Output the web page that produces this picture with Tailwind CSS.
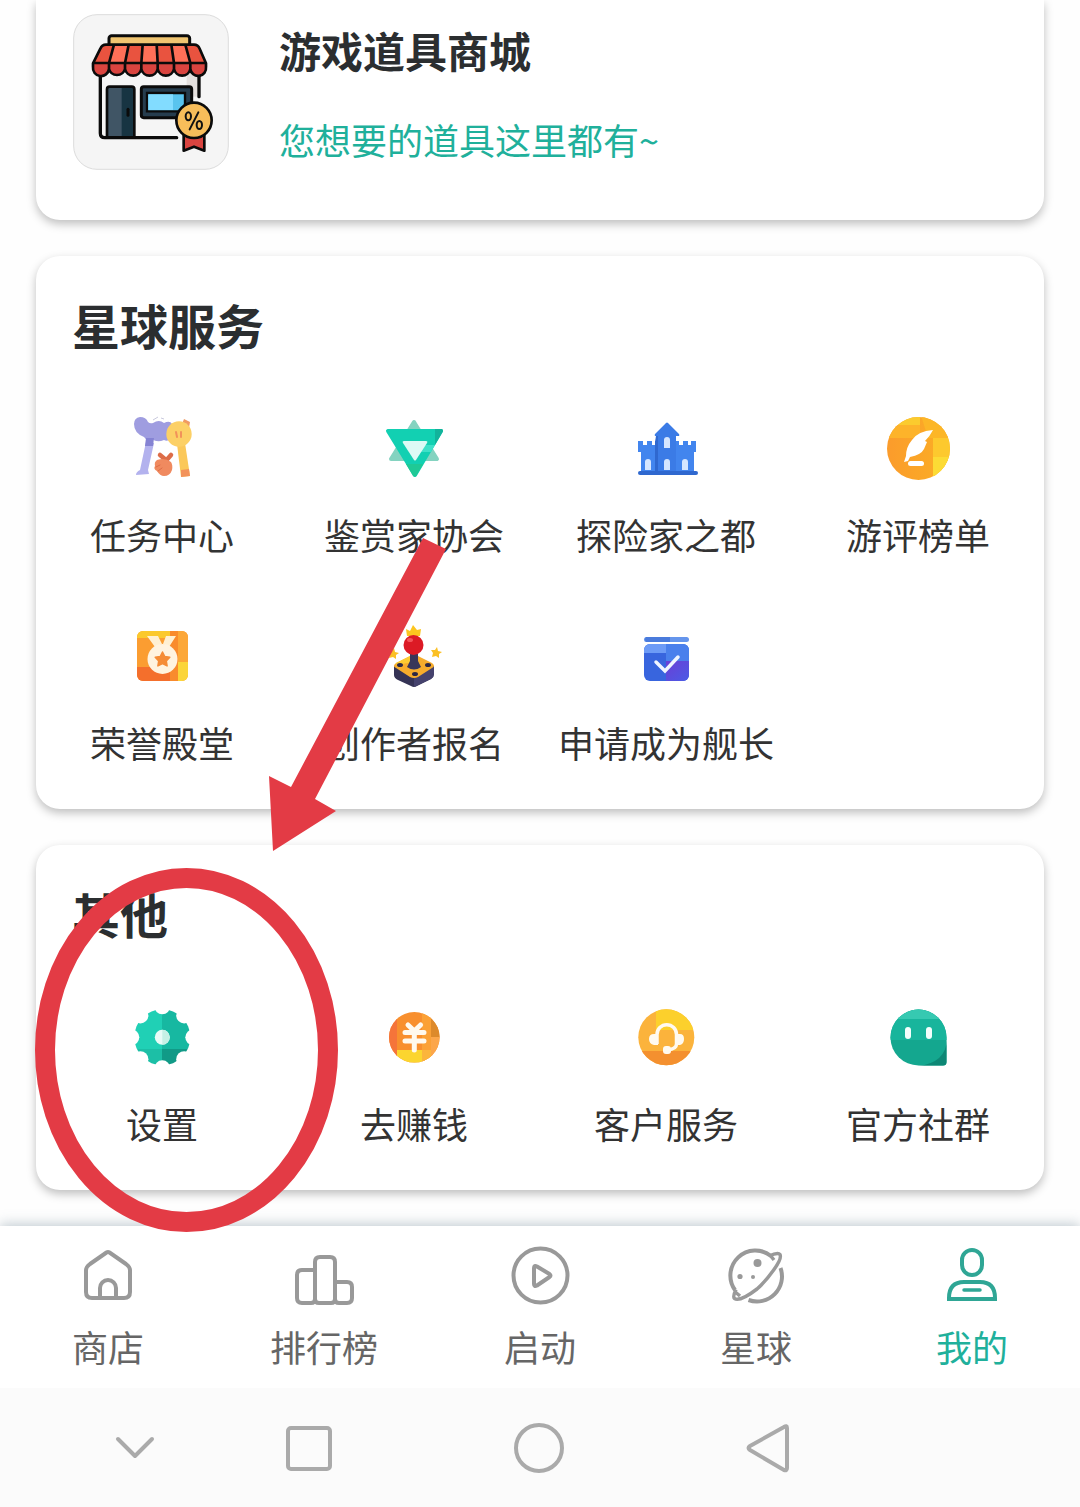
<!DOCTYPE html>
<html lang="zh-CN">
<head>
    <meta charset="UTF-8">
    <meta name="viewport" content="width=device-width, initial-scale=1.0">
    <title>我的</title>
    <script src="https://cdn.jsdelivr.net/npm/@tailwindcss/browser@4"></script>
</head>
<body class="relative min-h-screen overflow-x-hidden bg-[#fefefe] font-['Noto_Sans_CJK_SC',sans-serif] text-[#333]">
    <main class="flex flex-col gap-9 px-9 pb-9">
        <!-- Mall -->
        <a href="#mall" class="flex gap-[50px] rounded-b-3xl bg-white px-[37px] pt-[14px] pb-[50px] shadow-[0_4px_10px_rgba(0,0,0,0.25)]">
            <svg class="size-[156px] shrink-0" viewBox="39 42 468 468" aria-hidden="true">
                <rect x="41" y="44" width="464" height="464" rx="70" fill="#f5f5f5" stroke="#dcdcdc" stroke-width="3"/>
                <path d="M121 215V400q0 13 13 13H350" fill="none" stroke="#0b0b0b" stroke-width="10" stroke-linecap="round"/>
                <path d="M380 215h37v75h-37z" fill="#e4e0de"/>
                <path d="M417 215v75" stroke="#0b0b0b" stroke-width="10" stroke-linecap="round"/>
                <rect x="147" y="107" width="242" height="40" rx="8" fill="#f0c571" stroke="#0b0b0b" stroke-width="9"/>
                <path d="M138 134H402q12 0 17 12l18 44H99l22-44q5-12 17-12z" fill="#e9533f"/>
                <path d="M162 134h44l-8 54h-50zM247 134h43l3 54h-48zM335 134h44l12 54h-48z" fill="#ff7058"/>
                <path d="M99 190H438v11a23 23 0 0 1-47 6a25 25 0 0 1-49 0a25 25 0 0 1-49 0a25 25 0 0 1-49 0a25 25 0 0 1-49 0a25 25 0 0 1-48 0a23 23 0 0 1-48-6z" fill="#d9443f"/>
                <path d="M99 190l22-44q5-12 17-12H402q12 0 17 12l19 44v11a23 23 0 0 1-47 6a25 25 0 0 1-49 0a25 25 0 0 1-49 0a25 25 0 0 1-49 0a25 25 0 0 1-49 0a25 25 0 0 1-48 0a23 23 0 0 1-48-6zM99 189H438M162 134l-15 55v18M206 134l-11 55v18M248 134l-4 55v18M290 134l3 55v18M334 134l8 55v18M376 134l15 55v18" fill="none" stroke="#0b0b0b" stroke-width="8" stroke-linejoin="round"/>
                <path d="M141 412V268q0-8 8-8h66q8 0 8 8v144z" fill="#173442"/>
                <path d="M143 262h42v148h-42z" fill="#405565"/>
                <path d="M141 412V268q0-8 8-8h66q8 0 8 8v144z" fill="none" stroke="#0b0b0b" stroke-width="8"/>
                <path d="M204 328v18" stroke="#0b0b0b" stroke-width="9" stroke-linecap="round"/>
                <rect x="244" y="260" width="151" height="93" rx="7" fill="#263d4e" stroke="#0b0b0b" stroke-width="9"/>
                <path d="M261 279h114v55H261z" fill="#59c4ee" stroke="#0b0b0b" stroke-width="7"/>
                <path d="M265 283h74v47h-74z" fill="#82dcff"/>
                <path d="M371 395v57l31-12 31 12v-57z" fill="#d94440" stroke="#0b0b0b" stroke-width="8" stroke-linejoin="round"/>
                <circle cx="402" cy="361" r="53" fill="#f7bd5a" stroke="#0b0b0b" stroke-width="8"/>
                <path d="M415 337l-26 51" stroke="#111" stroke-width="6" stroke-linecap="round"/>
                <ellipse cx="385" cy="349" rx="8" ry="12" fill="none" stroke="#111" stroke-width="6"/>
                <ellipse cx="418" cy="375" rx="8" ry="12" fill="none" stroke="#111" stroke-width="6"/>
            </svg>
            <div class="pt-1.5">
                <h2 class="text-[42px] leading-[60px] font-bold text-[#2b2e30]">游戏道具商城</h2>
                <p class="mt-[35px] text-4xl leading-[48px] text-[#20b09b]">您想要的道具这里都有~</p>
            </div>
        </a>

        <!-- Planet services -->
        <section class="rounded-3xl bg-white pt-10 pb-[43px] shadow-[0_4px_10px_rgba(0,0,0,0.25)]">
            <h2 class="px-9 text-[48px] leading-[56px] font-bold text-[#2b2e30]">星球服务</h2>
            <div class="mt-15 grid grid-cols-4 gap-y-[62px] text-4xl leading-[48px] whitespace-nowrap">
                <a href="#tasks" class="flex flex-col items-center gap-[26px]">
                    <svg class="size-[72px]" viewBox="0 0 72 72" aria-hidden="true">
                        <path d="M20 30l8 1-6 27 1 4-13 1q0-3 4-5z" fill="#b3b2ee"/>
                        <path d="M8 12q0-6 6-7 6 0 8 5 2 2 5 1 6-4 11 0 6-3 8 1v14q-4 4-8 2-7 3-12-1-5 3-8-2Q8 21 8 12z" fill="#9f9de0"/>
                        <path d="M20 26h8l-1 8h-8z" fill="#8583d3"/>
                        <path d="M27 8l5-3m3 1l3 1" stroke="#c9c9dd" fill="none"/>
                        <path d="M58 7l6 3-1 6-7-4z" fill="#f09a62"/>
                        <path d="M51 32l8-1 5 33-9 1z" fill="#fbc85a"/>
                        <path d="M55 58l8-1 1 7-9 1z" fill="#f2925a"/>
                        <circle cx="53" cy="22" r="12.7" fill="#fcd066"/>
                        <path d="M50 20l1 5m4-5v5" stroke="#f2925a" stroke-width="2" stroke-linecap="round"/>
                        <path d="M34 43l6 5m5-5l-7 8" stroke="#dd6d48" stroke-width="4.500" stroke-linecap="round"/>
                        <path d="M31 48q8-3 14 2 2 3 1 8-2 6-8 6-4 0-7-5-4-2-2-5-1-4 2-6z" fill="#f08a5f"/>
                        <path d="M30 55l4-2m-2 6l4-3" stroke="#dd6d48" stroke-linecap="round"/>
                    </svg>
                    <span>任务中心</span>
                </a>
                <a href="#critics" class="flex flex-col items-center gap-[26px]">
                    <svg class="size-[72px]" viewBox="0 0 72 72" aria-hidden="true">
                        <path d="M36 10L59 47H13z" fill="#84d3c0" stroke="#84d3c0" stroke-width="4" stroke-linejoin="round"/>
                        <path d="M10 19h53L37 63z" fill="#12d0b2" stroke="#12d0b2" stroke-width="4" stroke-linejoin="round"/>
                        <path d="M57 17h7q2 1 0 4l-7 12z" fill="#12b39b"/>
                        <path d="M45 33h12l-4 7H43z" fill="#3fe0c8"/>
                        <path d="M28 52h17l-7 12q-1 1-3 0z" fill="#1fc996"/>
                        <path d="M26 29h22q2 0 1 2L38 48q-1 1-2 0L25 31q-1-2 1-2z" fill="#dcfaf5"/>
                    </svg>
                    <span>鉴赏家协会</span>
                </a>
                <a href="#explorers" class="flex flex-col items-center gap-[26px]">
                    <svg class="size-[72px]" viewBox="0 0 72 72" aria-hidden="true">
                        <path d="M8 29h5v4h4v-4h5v4h3v-4h4v30H11V40H8zM46 29h3v4h4v-4h5v4h3v-4h5v11h-2v19H46z" fill="#4285ee"/>
                        <path d="M25 22L36 11q1-1 2 0l11 11q1 2-1 2h-2v35H28V24h-2q-2 0-1-2z" fill="#3b7be6"/>
                        <path d="M26 24h2v35h-3V30z" fill="#2f68cf"/>
                        <path d="M34 36v-8a3 3 0 0 1 6 0v8zM15 58v-8a3 3 0 0 1 6 0v8zM34 58v-8a3 3 0 0 1 6 0v8zM52 58v-8a3 3 0 0 1 6 0v8z" fill="#d5e6ff"/>
                        <rect x="8" y="59" width="60" height="4" rx="2" fill="#2f68cf"/>
                    </svg>
                    <span>探险家之都</span>
                </a>
                <a href="#reviews" class="flex flex-col items-center gap-[26px]">
                    <svg class="size-[72px]" viewBox="0 0 72 72" aria-hidden="true">
                        <defs>
                            <clipPath id="coin"><circle cx="36.5" cy="36.500" r="31.500"/></clipPath>
                            <linearGradient id="amber" x1="0" x2="1"><stop stop-color="#fb9a2c"/><stop offset="1" stop-color="#fbb024"/></linearGradient>
                        </defs>
                        <g clip-path="url(#coin)">
                            <path d="M0 0h72v72H0z" fill="url(#amber)"/>
                            <path d="M0 13h38v13H0z" fill="#fdb32a"/>
                            <path d="M0 0h38v13H0z" fill="#fbcb2e"/>
                            <path d="M38 0h34v26H46z" fill="#fcb627"/>
                            <path d="M51 26h21v46H51z" fill="#fdc92e"/>
                            <path d="M51 45h21v27H51z" fill="#fcdb35"/>
                        </g>
                        <path d="M51 18Q36 19 30 28q-6 7-6 16l-2 6 4-1 2-4q11-2 14-8l3-7-2-1q5-5 8-11z" fill="#fff"/>
                        <rect x="26" y="49" width="16" height="5" rx="2.500" fill="#fff"/>
                    </svg>
                    <span>游评榜单</span>
                </a>
                <a href="#honor" class="flex flex-col items-center gap-[26px]">
                    <svg class="size-[72px]" viewBox="0 0 72 72" aria-hidden="true">
                        <clipPath id="badge"><rect x="11" y="11" width="51" height="50" rx="6"/></clipPath>
                        <g clip-path="url(#badge)">
                            <path d="M0 0h72v72H0z" fill="#fb9d31"/>
                            <path d="M11 10h33v8H11z" fill="#fbc92d"/>
                            <path d="M11 47h34v14H11z" fill="#f46f2c"/>
                            <path d="M44 10h8v51h-8z" fill="#f98b2d"/>
                            <path d="M52 10h10v32H52z" fill="#fca738"/>
                            <path d="M52 42h10v19H52z" fill="#fbd53a"/>
                        </g>
                        <path d="M21 16h11l4 8-7 3zM50 16H40l-3 8 6 3z" fill="#fff0d2"/>
                        <circle cx="36.500" cy="39" r="15" fill="#fff3df"/>
                        <path d="M36.500 32l2.300 4.500 5 .8-3.500 3.600.8 5-4.600-2.300-4.600 2.300.8-5-3.500-3.600 5-.8z" fill="#f58c36" stroke="#f58c36" stroke-width="1.500" stroke-linejoin="round"/>
                    </svg>
                    <span>荣誉殿堂</span>
                </a>
                <a href="#creators" class="flex flex-col items-center gap-[26px]">
                    <svg class="size-[72px]" viewBox="0 0 72 72" aria-hidden="true">
                        <path d="M28 9l4 2 3-6 4 5 4-1-1 7H29z" fill="#fcc51f"/>
                        <path d="M16 46l20 10 20-10v8q0 3-3 5L39 66q-3 2-6 0L20 60q-4-2-4-5z" fill="#353355"/>
                        <path d="M36 56l20-10v8q0 3-3 5L36 67z" fill="#45426d"/>
                        <path d="M18 43l14-7q4-2 8 0l14 7q4 3 0 5L40 57q-4 2-8 0L18 48q-4-2 0-5z" fill="#f6ac2c"/>
                        <path d="M18 43l14-7h8l-3 8q-10-3-17 3z" fill="#fccb32"/>
                        <path d="M32 34h8v7l3 6q-7 5-14 0l3-6z" fill="#393659"/>
                        <ellipse cx="22" cy="45" rx="3" ry="2" fill="#2c2744"/>
                        <ellipse cx="50" cy="45" rx="3" ry="2" fill="#2c2744"/>
                        <ellipse cx="37" cy="54" rx="3" ry="2" fill="#2c2744"/>
                        <circle cx="35.500" cy="25" r="10" fill="#dc1a25"/>
                        <ellipse cx="32" cy="20" rx="3" ry="2" fill="#f4535a"/>
                        <path d="M59 27l1 4 4 1-3 2 0 4-3-2-4 1 1-4-2-3 4 0zM16 28l1 4 4 1-3 2 0 4-3-2-4 1 1-4-2-3 4 0z" fill="#fbc024"/>
                    </svg>
                    <span>创作者报名</span>
                </a>
                <a href="#captain" class="flex flex-col items-center gap-[26px]">
                    <svg class="size-[72px]" viewBox="0 0 72 72" aria-hidden="true">
                        <defs>
                            <clipPath id="box"><rect x="14" y="24" width="45" height="37" rx="6"/></clipPath>
                            <linearGradient id="violet" x1="0" x2="1" y2="1"><stop stop-color="#6a3fd6"/><stop offset="1" stop-color="#4a5ce6"/></linearGradient>
                        </defs>
                        <rect x="14" y="17" width="45" height="5" rx="2.500" fill="#6595ec"/>
                        <path d="M16 17h24v5H16q-2-2.500 0-5z" fill="#4a7bdc"/>
                        <g clip-path="url(#box)">
                            <path d="M0 0h72v72H0z" fill="#3865de"/>
                            <path d="M14 23h22v10H14z" fill="#6d9bf6"/>
                            <path d="M36 23h24v18H36z" fill="#4a80ec"/>
                            <path d="M36 41h24v20H36z" fill="url(#violet)"/>
                        </g>
                        <path d="M26 42l9 9 13-14" fill="none" stroke="#f0f5ff" stroke-width="3.500" stroke-linecap="round"/>
                    </svg>
                    <span>申请成为舰长</span>
                </a>
            </div>
        </section>

        <!-- Other -->
        <section class="rounded-3xl bg-white pt-10 pb-[43px] shadow-[0_4px_10px_rgba(0,0,0,0.25)]">
            <h2 class="px-9 text-[48px] leading-[56px] font-bold text-[#2b2e30]">其他</h2>
            <div class="mt-15 grid grid-cols-4 text-4xl leading-[48px] whitespace-nowrap">
                <a href="#settings" class="flex flex-col items-center gap-[26px]">
                    <svg class="size-[72px]" viewBox="0 0 72 72" aria-hidden="true">
                        <mask id="gear">
                            <circle cx="36.300" cy="36.300" r="28" fill="#fff"/>
                            <circle cx="36.300" cy="5.300" r="8"/>
                            <circle cx="36.300" cy="67.300" r="8"/>
                            <circle cx="5.300" cy="36.300" r="8"/>
                            <circle cx="67.300" cy="36.300" r="8"/>
                            <circle cx="14.400" cy="14.400" r="8"/>
                            <circle cx="58.200" cy="14.400" r="8"/>
                            <circle cx="14.400" cy="58.200" r="8"/>
                            <circle cx="58.200" cy="58.200" r="8"/>
                        </mask>
                        <g mask="url(#gear)">
                            <path d="M0 0h36v72H0z" fill="#20d0b5"/>
                            <path d="M36 0h36v72H36z" fill="#17b8a1"/>
                            <path d="M0 48h36v24H0z" fill="#1cbfa6"/>
                            <path d="M36 48h36v24H36z" fill="#119a87"/>
                        </g>
                        <circle cx="36.300" cy="36.300" r="7.500" fill="#e9fbf7"/>
                        <path d="M36.300 28.800a7.500 7.500 0 0 1 0 15z" fill="#c6f0e5"/>
                    </svg>
                    <span>设置</span>
                </a>
                <a href="#earn" class="flex flex-col items-center gap-[26px]">
                    <svg class="size-[72px]" viewBox="0 0 72 72" aria-hidden="true">
                        <clipPath id="yen"><circle cx="36.300" cy="36.300" r="25.300"/></clipPath>
                        <g clip-path="url(#yen)">
                            <path d="M0 0h72v72H0z" fill="#f88f2e"/>
                            <path d="M0 0h19v72H0z" fill="#f5743a"/>
                            <path d="M19 49h25v23H19z" fill="#fbd52f"/>
                            <path d="M44 0h9v72h-9z" fill="#fba136"/>
                            <path d="M53 0h19v36H53z" fill="#dd8a2b"/>
                            <path d="M53 36h19v36H53z" fill="#fca64a"/>
                            <path d="M44 49h9v23h-9z" fill="#fbb53c"/>
                        </g>
                        <path d="M30 24l6.300 6 6.300-6M36.300 30v19M27 31.500h19M27 40h19" fill="none" stroke="#fff9ee" stroke-width="5" stroke-linecap="round" stroke-linejoin="round"/>
                    </svg>
                    <span>去赚钱</span>
                </a>
                <a href="#support" class="flex flex-col items-center gap-[26px]">
                    <svg class="size-[72px]" viewBox="0 0 72 72" aria-hidden="true">
                        <clipPath id="support-disc"><circle cx="36.300" cy="36.300" r="28"/></clipPath>
                        <g clip-path="url(#support-disc)">
                            <path d="M0 0h72v72H0z" fill="#fbb33c"/>
                            <path d="M26 0h46v29H26z" fill="#fcd02c"/>
                            <path d="M0 50h72v22H0z" fill="#f4902f"/>
                        </g>
                        <path d="M27 43V33.500a9.700 9.700 0 0 1 19.500 0V43q0 5-9 6" fill="none" stroke="#fffaf0" stroke-width="3.500"/>
                        <path d="M28 33v11h-4q-5-1-5-6t5-5zM46 33v11h4q4-1 4-6t-4-5z" fill="#fffaf0"/>
                        <rect x="33" y="45" width="8" height="8" rx="3" fill="#fffaf0"/>
                    </svg>
                    <span>客户服务</span>
                </a>
                <a href="#community" class="flex flex-col items-center gap-[26px]">
                    <svg class="size-[72px]" viewBox="0 0 72 72" aria-hidden="true">
                        <clipPath id="bubble"><path d="M36.500 8.500A28 28 0 0 1 64.500 36.500V61q0 3.500-3.500 3.500H36.500a28 28 0 0 1 0-56z"/></clipPath>
                        <g clip-path="url(#bubble)">
                            <path d="M0 0h72v72H0z" fill="#14a78f"/>
                            <path d="M0 0h72v39H0z" fill="#18b59c"/>
                            <path d="M0 0h72v18H0z" fill="#36c9b1"/>
                            <path d="M65 38Q64 62 36 65h29z" fill="#0d8775"/>
                        </g>
                        <rect x="23" y="26" width="6" height="12" rx="3" fill="#f4fffd"/>
                        <rect x="44" y="26" width="6" height="12" rx="3" fill="#f4fffd"/>
                    </svg>
                    <span>官方社群</span>
                </a>
            </div>
        </section>
    </main>

    <!-- Tab bar -->
    <nav class="relative grid grid-cols-5 bg-white pt-[14px] pb-[18px] text-4xl leading-[48px] text-[#666] shadow-[0_-2px_12px_rgba(80,110,125,0.35)]">
        <a href="#store" class="flex flex-col items-center gap-2.5">
            <svg class="size-[72px]" viewBox="0 0 72 72" fill="none" stroke="#999" stroke-width="4" stroke-linejoin="round" aria-hidden="true">
                <path d="M34.500 12.500q1.500-1 3 0L54 24q4 3 4 6v22q0 6-6 6H20q-6 0-6-6V30q0-3 4-6z"/>
                <path d="M28 58V48a8 8 0 0 1 16 0v10"/>
            </svg>
            <span>商店</span>
        </a>
        <a href="#ranking" class="flex flex-col items-center gap-2.5">
            <svg class="size-[72px]" viewBox="0 0 72 72" fill="none" stroke="#999" stroke-width="4" aria-hidden="true">
                <path d="M27 30H14q-5 0-5 5v23q0 5 5 5h9q4 0 4-4 0 4 4 4h12q4 0 4-4 0 4 4 4h8q5 0 5-5V47q0-5-5-5H47"/>
                <path d="M27 60V22q0-5 5-5h10q5 0 5 5v38"/>
            </svg>
            <span>排行榜</span>
        </a>
        <a href="#launch" class="flex flex-col items-center gap-2.5">
            <svg class="size-[72px]" viewBox="0 0 72 72" fill="none" stroke="#999" stroke-width="4" stroke-linejoin="round" aria-hidden="true">
                <circle cx="36.500" cy="35.500" r="27"/>
                <path d="M30 28q0-3 3-1.500l12.500 7.500q2 1.500 0 3L33 45.500q-3 1.500-3-1.500z"/>
            </svg>
            <span>启动</span>
        </a>
        <a href="#planet" class="flex flex-col items-center gap-2.5">
            <svg class="size-[72px]" viewBox="0 0 72 72" fill="none" stroke="#999" stroke-width="4" aria-hidden="true">
                <path d="M15 50A25 25 0 0 1 51 16M60.500 28A25 25 0 0 1 28.500 60"/>
                <path d="M49 16q9-4 11-1.500 2 4-6 15Q46 41 37 49 20 62 14.500 58.500q-2-2 1.500-9M50 15l4 5M14 51l6 5" stroke-width="3.500"/>
                <g fill="#999" stroke="none">
                    <circle cx="37.500" cy="23" r="4"/>
                    <circle cx="20" cy="36.500" r="2.600"/>
                    <circle cx="33" cy="37" r="2"/>
                </g>
            </svg>
            <span>星球</span>
        </a>
        <a href="#me" aria-current="page" class="flex flex-col items-center gap-2.5 text-[#20b09b]">
            <svg class="size-[72px]" viewBox="0 0 72 72" fill="none" stroke="#2fa695" stroke-width="4" aria-hidden="true">
                <rect x="26" y="10" width="20" height="25" rx="10"/>
                <path d="M13 59v-1q0-16 15-16h16q15 0 15 16v1z"/>
                <path d="M28 50h16" stroke-width="3.500" stroke-linecap="round"/>
            </svg>
            <span>我的</span>
        </a>
    </nav>

    <!-- System keys -->
    <div class="relative flex h-[119px] items-center bg-[#fbfbfb]">
        <button type="button" aria-label="收起" class="flex w-[18%] justify-end pr-[37px]">
            <svg class="h-12 w-11" viewBox="0 0 44 48" fill="none" stroke="#aaa" stroke-width="4" stroke-linecap="round" stroke-linejoin="round"><path d="M5 15l17 17 17-17"/></svg>
        </button>
        <button type="button" aria-label="最近任务" class="flex w-[21.3%] justify-center">
            <svg class="size-[50px]" viewBox="0 0 50 50" fill="none" stroke="#aaa" stroke-width="4"><rect x="4" y="5" width="42" height="41" rx="3"/></svg>
        </button>
        <button type="button" aria-label="主页" class="flex w-[21.3%] justify-center">
            <svg class="size-[50px]" viewBox="0 0 50 50" fill="none" stroke="#aaa" stroke-width="4"><circle cx="25" cy="25" r="23"/></svg>
        </button>
        <button type="button" aria-label="返回" class="flex w-[21.3%] justify-center">
            <svg class="size-[50px]" viewBox="0 0 50 50" fill="none" stroke="#aaa" stroke-width="4" stroke-linejoin="round"><path d="M43 5q0-3-3-1L6 23q-3 2 0 4l34 20q3 1 3-2z"/></svg>
        </button>
    </div>

    <!-- Hand-drawn pointer to the settings entry -->
    <svg class="pointer-events-none absolute top-0 left-0 h-[1507px] w-[1080px]" viewBox="0 0 1080 1507" aria-hidden="true">
        <path d="M423 538l23 11-131 250 21 12-63 40-4-75 22 11z" fill="#e33b45"/>
        <ellipse cx="186.500" cy="1050" rx="141.500" ry="172" fill="none" stroke="#e33b45" stroke-width="20"/>
    </svg>
</body>
</html>
